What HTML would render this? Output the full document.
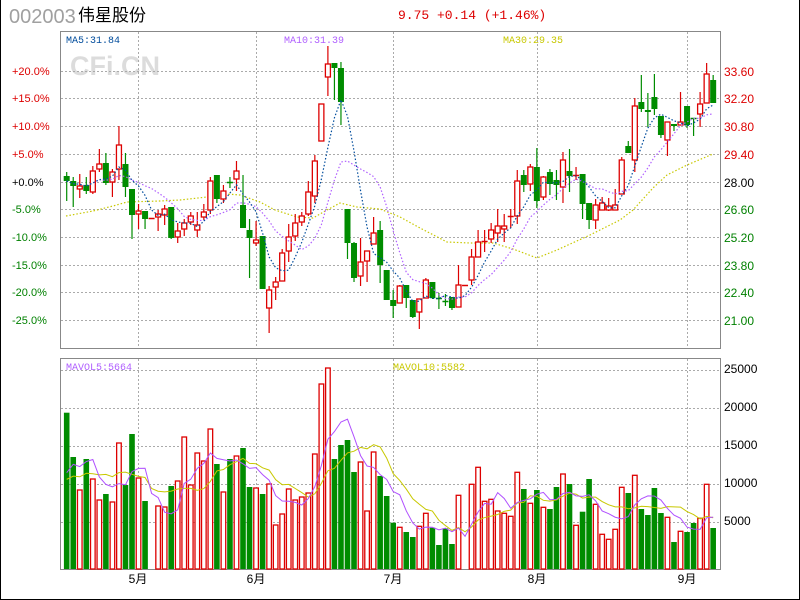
<!DOCTYPE html>
<html><head><meta charset="utf-8">
<style>
html,body{margin:0;padding:0;background:#fff;}
#c{position:relative;width:800px;height:600px;overflow:hidden;background:#fff;}
svg{position:absolute;left:0;top:0;}
</style></head>
<body><div id="c">
<svg id="s" width="800" height="600" xmlns="http://www.w3.org/2000/svg" font-family="Liberation Sans, sans-serif">
<rect x="0.5" y="-1" width="799" height="600.5" fill="none" stroke="#000" stroke-width="1"/>
<text x="9" y="23" font-size="20" fill="#a0a0a0">002003</text>
<text x="78" y="21" font-size="17" fill="#000" font-family="Liberation Sans, Noto Sans CJK SC, sans-serif">伟星股份</text>
<text x="398" y="19" font-size="13" fill="#dd0000" font-family="Liberation Mono, monospace">9.75 +0.14 (+1.46%)</text>
<text x="70" y="75" font-size="27" font-weight="bold" fill="#dcdcdc">CFi.CN</text>
<g id="grid"></g>
<rect x="60.5" y="31.5" width="660" height="317" fill="none" stroke="#888"/>
<rect x="60.5" y="358.5" width="660" height="211" fill="none" stroke="#888"/>
<g id="plot"></g>
<g font-family="Liberation Mono, monospace" font-size="10">
<text x="66" y="43" fill="#004c9c">MA5:31.84</text>
<text x="284" y="43" fill="#b060ff">MA10:31.39</text>
<text x="503" y="43" fill="#c8c800">MA30:29.35</text>
<text x="66" y="370" fill="#b060ff">MAVOL5:5664</text>
<text x="393" y="370" fill="#c8c800">MAVOL10:5582</text>
</g>
<g id="labels" font-size="11"></g>
</svg>
</div>
<script>
var NS="http://www.w3.org/2000/svg";
function el(p,t,a,txt){var e=document.createElementNS(NS,t);for(var k in a)e.setAttribute(k,a[k]);if(txt!=null)e.textContent=txt;p.appendChild(e);return e;}
var grid=document.getElementById('grid'),plot=document.getElementById('plot'),lab=document.getElementById('labels');
var hy=[71,98,126,154,182,209,237,265,292,320];
hy.forEach(function(y){el(grid,'line',{x1:61,x2:720,y1:y+.5,y2:y+.5,stroke:'#aaa','stroke-dasharray':'2,2'});});
[370,408,446,484,522].forEach(function(y){el(grid,'line',{x1:61,x2:720,y1:y+.5,y2:y+.5,stroke:'#aaa','stroke-dasharray':'2,2'});});
var vx=[138,256,393,537,687];
vx.forEach(function(x){el(grid,'line',{x1:x+.5,x2:x+.5,y1:32,y2:348,stroke:'#aaa','stroke-dasharray':'2,2'});el(grid,'line',{x1:x+.5,x2:x+.5,y1:359,y2:569,stroke:'#aaa','stroke-dasharray':'2,2'});});
var months=['5月','6月','7月','8月','9月'];
vx.forEach(function(x,i){el(lab,'text',{x:x,y:583,'text-anchor':'middle','font-size':12,fill:'#000','font-family':'Liberation Sans, Noto Sans CJK SC, sans-serif'},months[i]);});
var lt=['+20.0%','+15.0%','+10.0%','+5.0%','+0.0%','-5.0%','-10.0%','-15.0%','-20.0%','-25.0%'];
var rt=['33.60','32.20','30.80','29.40','28.00','26.60','25.20','23.80','22.40','21.00'];
hy.forEach(function(y,i){var c=i<4?'#dd0000':(i==4?'#000':'#008000');
el(lab,'text',{x:12,y:y+4,fill:c},lt[i]);el(lab,'text',{x:724,y:y+5,fill:c,'font-size':12},rt[i]);});
['25000','20000','15000','10000','5000'].forEach(function(t,i){el(lab,'text',{x:724,y:373+i*38,fill:'#000','font-size':12},t);});
var D=[
['g',176,181,172,201],['g',181,186,177,207],['r',186,189,174,198],['g',185,191,177,194],['r',171,192,166,194],
['r',164,169,149,172],['g',163,183,153,185],['r',172,182,169,197],['r',145,169,126,180],['g',164,187,153,197],
['g',189,215,189,239],['r',211,214,204,229],['g',211,219,211,229],['r',218,218,218,218],['r',214,217,210,231],
['r',209,215,205,225],['g',207,238,207,239],['r',231,237,223,243],['r',223,229,219,236],['r',216,222,212,225],
['r',225,230,212,237],['r',212,217,204,220],['r',181,210,177,214],['g',175,199,175,203],['r',191,199,185,203],
['g',182,182,177,188],['r',171,179,161,191],['g',205,228,175,228],['g',230,238,219,278],['r',240,243,221,246],
['g',236,289,236,289],['r',290,308,286,333],['r',282,287,277,300],['r',253,281,249,281],['r',237,251,224,262],
['r',223,236,214,241],['r',216,222,212,226],['r',192,214,181,216],['r',161,196,155,203],['r',104,141,104,141],
['r',64,77,46,96],['g',63,68,63,100],['g',68,102,62,125],['g',209,243,209,259],['g',243,278,242,282],
['r',262,276,238,286],['r',251,261,251,282],['r',233,244,217,244],['g',230,265,221,283],['g',270,300,270,300],
['g',300,306,290,318],['r',286,303,285,303],['g',285,298,285,308],['g',300,317,300,318],['r',299,312,299,329],
['r',280,298,278,298],['g',282,298,282,299],['g',298,299,293,309],['g',301,301,294,306],['g',297,308,297,310],
['r',285,307,265,307],['r',285,285,285,285],['r',257,280,249,285],['r',242,257,230,257],['r',241,242,230,252],
['r',230,239,223,243],['r',226,233,209,242],['r',226,229,214,242],['r',216,216,209,228],['r',181,216,170,224],
['g',175,185,170,192],['r',167,184,164,191],['g',167,201,148,208],['r',177,197,176,200],['g',172,184,169,195],
['g',180,185,170,200],['r',160,187,152,203],['g',171,176,149,192],['r',175,175,167,180],['g',174,204,174,219],
['g',203,220,203,229],['r',205,220,199,229],['r',203,210,197,210],['r',206,210,198,211],['r',205,210,189,210],
['r',160,194,157,194],['g',146,153,141,153],['r',106,160,98,172],['g',102,109,75,112],['g',110,112,93,127],
['g',97,109,74,115],['g',116,135,116,138],['r',122,140,122,156],['g',124,126,124,131],['r',122,125,92,125],
['g',106,125,106,128],['g',118,119,118,136],['r',104,114,92,127],['r',74,103,63,103],['g',80,103,75,103]];
var V=[412.7,457,490,459,479,500,494,502,443,485,434,478,501,null,506,507,486,481,437,485,453,461,429,464,492,459,456,448,487,488,494,484,525,514,489,500,497,493,454,384,368,459,445,440,472,462,511,452,476,496,
522.7,527.3,532,537,526.3,513.3,527.7,545,528.3,544,495.3,null,484.3,467.3,501.3,499.3,511,513.3,516.3,472.3,489,503.3,490,507.3,509,487,474,484,525.3,511.7,
479,504.3,534.3,539.3,529.3,487.3,493,475.3,509,515,488,513,517.3,542,531.3,532,523,518.3,484.3,528];
var R='#dd0000',G='#008c00';
function X(i){return 66.7+i*6.53;}
var m30=[[66,216],[93,211],[113,206],[127,202],[160,201],[180,200],[207,197],[227,194],[240,195],[260,202],[275,210],[297,217],[313,218],[327,210],[340,203],[357,207],[380,209],[400,217],[420,228],[447,242],[470,243],[493,243],[513,249],[537,258],[557,250],[590,235],[620,220],[633,210],[653,188],[667,175],[687,165],[713,154]];
el(plot,'polyline',{points:m30.map(function(p){return p.join(',')}).join(' '),fill:'none',stroke:'#c8c800','stroke-width':1.2,'stroke-dasharray':'1.5,2'});
var vh=V.map(function(v){return v==null?0:569-v;});
var pre=[80,85,75,95,80,70,90,85,80];
var vhp=pre.concat(vh);
function ma(arr,n){return arr.map(function(_,i){var s=0,c=0;for(var j=Math.max(0,i-n+1);j<=i;j++){s+=arr[j];c++;}return s/c;});}
D.forEach(function(d,i){var x=X(i),c=d[0]=='r'?R:G;
el(plot,'line',{x1:x,x2:x,y1:d[3],y2:d[4],stroke:c,'stroke-width':1.2});
var h=d[2]-d[1];
if(h<1.5){el(plot,'line',{x1:x-3,x2:x+3,y1:d[1]+.5,y2:d[1]+.5,stroke:c,'stroke-width':1.5});}
else if(d[0]=='r'){el(plot,'rect',{x:x-2.5,y:d[1],width:5,height:h,fill:'#fff',stroke:R,'stroke-width':1.3});}
else{el(plot,'rect',{x:x-3,y:d[1],width:6,height:h,fill:G});}
});
V.forEach(function(v,i){if(v==null)return;var x=X(i);
if(D[i][0]=='r')el(plot,'rect',{x:x-2.3,y:v,width:4.6,height:569-v,fill:'#fff',stroke:R,'stroke-width':1.3});
else el(plot,'rect',{x:x-2.8,y:v,width:5.6,height:569-v,fill:G});});
var v5=ma(vhp,5).slice(9),v10=ma(vhp,10).slice(9);
el(plot,'polyline',{points:v10.map(function(h,i){return X(i)+','+(569-h)}).join(' '),fill:'none',stroke:'#c8c800','stroke-width':1});
el(plot,'polyline',{points:v5.map(function(h,i){return X(i)+','+(569-h)}).join(' '),fill:'none',stroke:'#b050ff','stroke-width':1});
var cl=D.map(function(d){return d[0]=='r'?d[1]:d[2];});
var p5=ma(cl,5),p10=ma(cl,10);
el(plot,'polyline',{points:p10.map(function(y,i){return X(i)+','+y}).join(' '),fill:'none',stroke:'#b060ff','stroke-width':1.2,'stroke-dasharray':'1.5,2'});
el(plot,'polyline',{points:p5.map(function(y,i){return X(i)+','+y}).join(' '),fill:'none',stroke:'#004c9c','stroke-width':1.2,'stroke-dasharray':'1.5,2'});
</script>
</body></html>
